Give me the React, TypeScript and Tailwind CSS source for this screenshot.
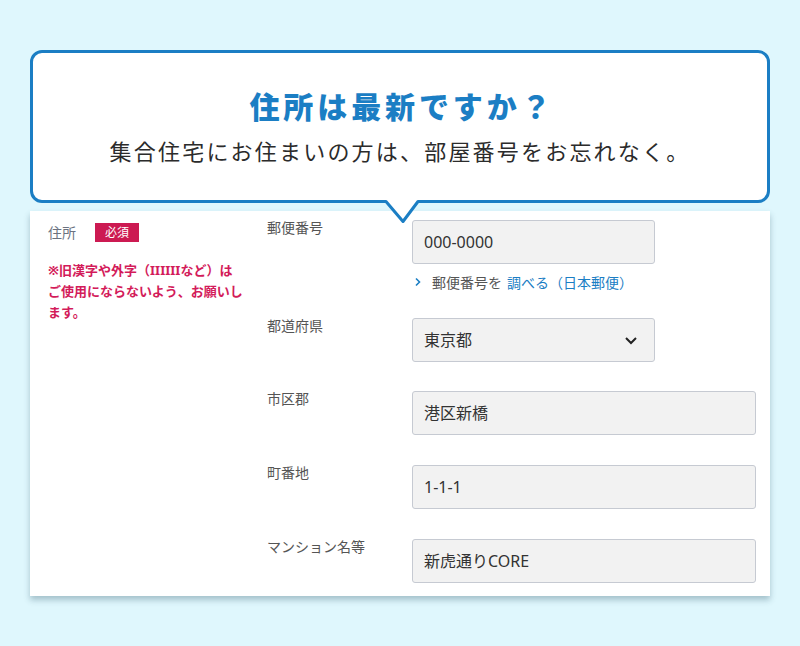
const font = { fontFamily: '"Noto Sans", "Noto Sans CJK JP", sans-serif' };
const cjk = { fontFamily: '"Noto Sans CJK JP", sans-serif' };

function Field({ label, value }: { label: string; value: string }) {
  return (
    <div className="flex items-start">
      <div className="w-[145px] text-[14px] leading-[16px] text-[#555]">{label}</div>
      <div className="w-[344px] h-[44px] flex items-center px-[11px] bg-[#f2f2f2] border border-[#c6cad2] rounded-[3px] text-[16px] text-[#333]">
        {value}
      </div>
    </div>
  );
}

export default function App() {
  return (
    <div className="min-h-[646px] bg-[#dff7fd] px-[30px] pt-[50px] pb-[50px]" style={font}>
      {/* speech bubble */}
      <div className="relative z-10 h-[153px] bg-white border-[3px] border-[#1b7ec4] rounded-[12px] flex flex-col items-center pt-[32px]">
        <h1
          className="text-[30px] leading-[40px] font-black tracking-[0.13em] text-[#1b7ec4] pl-[4px]"
          style={cjk}
        >
          住所は最新ですか？
        </h1>
        <p className="mt-[10px] text-[22px] leading-[32px] tracking-[0.1em] text-[#2b2b2b]">
          集合住宅にお住まいの方は、部屋番号をお忘れなく。
        </p>
        <svg
          className="absolute left-[350px] top-[147px]"
          width="38"
          height="25"
          viewBox="0 0 38 25"
        >
          <path d="M0 1.5 H3 L20 21.5 L35 1.5 H38 V0 H0 Z" fill="white" />
          <path d="M0 1.5 H3 L20 21.5 L35 1.5 H38" fill="white" stroke="#1b7ec4" strokeWidth="3" strokeLinejoin="round" />
        </svg>
      </div>

      {/* form card */}
      <div className="mt-[8px] bg-white shadow-[0_4px_6px_rgba(30,70,90,0.3)] flex pt-[9px] pb-[13px] pl-[18px] pr-[14px]">
        <div className="w-[219px] pt-[2px]">
          <div className="flex items-center">
            <span className="text-[14px] text-[#6b7280]">住所</span>
            <span className="ml-[19px] h-[19px] px-[10px] flex items-center bg-[#cc1a52] text-white text-[12px]">
              必須
            </span>
          </div>
          <p className="mt-[17px] w-[205px] text-[13px] leading-[21px] font-bold text-[#d31b5a]">
            ※旧漢字や外字（IIIIIIなど）は
            <br />
            ご使用にならないよう、お願いします。
          </p>
        </div>

        <div className="flex flex-col">
          <div className="flex items-start">
            <div className="w-[145px] text-[14px] leading-[16px] text-[#555]">郵便番号</div>
            <div>
              <div className="w-[243px] h-[44px] flex items-center px-[11px] bg-[#f2f2f2] border border-[#c6cad2] rounded-[3px] text-[16px] text-[#333]">
                000-0000
              </div>
              <div className="mt-[8px] flex items-center h-[20px] text-[14px] text-[#555]">
                <svg width="8" height="10" viewBox="0 0 8 10" className="ml-[2px] mr-[10px]">
                  <path d="M2 1.5 L5.5 5 L2 8.5" fill="none" stroke="#1b7ec4" strokeWidth="1.6" />
                </svg>
                <span>郵便番号を</span>
                <span className="ml-[5px] text-[#1b7ec4]">調べる（日本郵便）</span>
              </div>
            </div>
          </div>

          <div className="mt-[26px] flex items-start">
            <div className="w-[145px] text-[14px] leading-[16px] text-[#555]">都道府県</div>
            <div className="w-[243px] h-[44px] flex items-center justify-between pl-[11px] pr-[16px] bg-[#f2f2f2] border border-[#c6cad2] rounded-[3px] text-[16px] text-[#333]">
              <span>東京都</span>
              <svg width="14" height="9" viewBox="0 0 14 9">
                <path d="M2 2 L7 7 L12 2" fill="none" stroke="#222" strokeWidth="2" />
              </svg>
            </div>
          </div>

          <div className="mt-[29px]">
            <Field label="市区郡" value="港区新橋" />
          </div>
          <div className="mt-[30px]">
            <Field label="町番地" value="1-1-1" />
          </div>
          <div className="mt-[30px]">
            <Field label="マンション名等" value="新虎通りCORE" />
          </div>
        </div>
      </div>
    </div>
  );
}
